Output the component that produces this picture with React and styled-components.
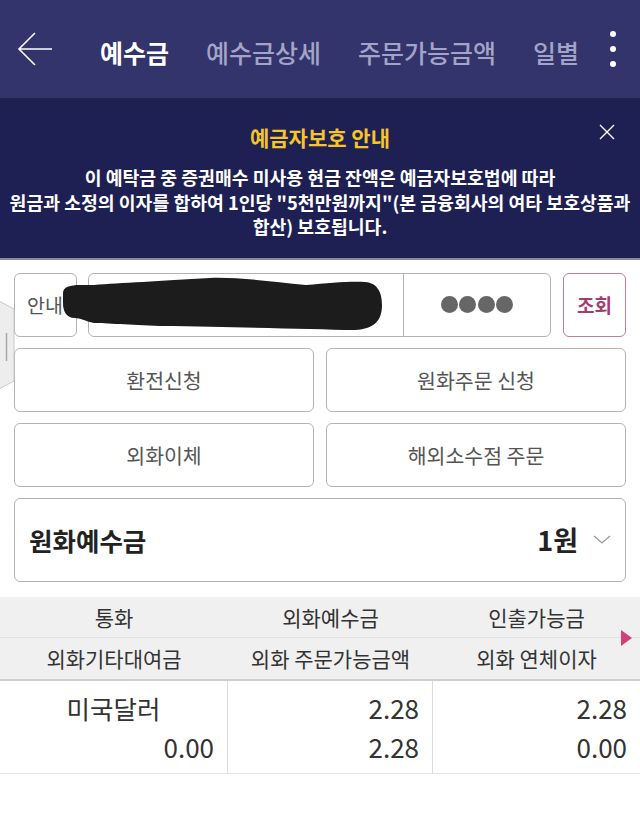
import React from "react";
import styled, { createGlobalStyle } from "styled-components";

const Global = createGlobalStyle`
  html, body { margin: 0; padding: 0; background: #fff; }
  body { font-family: "Noto Sans CJK KR", "Noto Sans", sans-serif; }
  * { box-sizing: border-box; }
`;

const Page = styled.div`
  position: relative;
  width: 640px;
  min-height: 830px;
  background: #fff;
  overflow: hidden;
`;

const Header = styled.header`
  display: flex;
  align-items: center;
  height: 100px;
  padding-bottom: 1px;
  background: #33346b;
  border-bottom: 2px solid #22234a;
`;

const BackBtn = styled.div`
  display: flex;
  width: 36px;
  height: 34px;
  margin-left: 17px;
  margin-right: 47px;
`;

const Tabs = styled.nav`
  display: flex;
  align-items: center;
  gap: 37px;
  width: 478px;
  height: 44px;
  margin-top: 6px;
  overflow: hidden;
  white-space: nowrap;
`;

const Tab = styled.span`
  flex: none;
  font-size: 25px;
  line-height: 40px;
  font-weight: ${(p) => (p.$active ? 700 : 500)};
  color: ${(p) => (p.$active ? "#ffffff" : "#a3a4c8")};
`;

const Kebab = styled.div`
  display: flex;
  flex-direction: column;
  gap: 9px;
  margin-left: auto;
  margin-right: 24px;
`;

const Dot = styled.span`
  width: 6px;
  height: 6px;
  border-radius: 50%;
  background: #fff;
`;

const Notice = styled.section`
  position: relative;
  background: #1e1f53;
  padding: 24px 0 19px;
  border-bottom: 2px solid #8a8a9a;
  text-align: center;
`;

const NoticeTitle = styled.h2`
  margin: 0;
  font-size: 21px;
  line-height: 26px;
  font-weight: 700;
  color: #f6c526;
`;

const CloseBtn = styled.div`
  position: absolute;
  top: 24px;
  right: 25px;
  width: 16px;
  height: 16px;
  display: flex;
`;

const NoticeText = styled.p`
  margin: 15px 0 0;
  font-size: 18.3px;
  line-height: 24.5px;
  font-weight: 700;
  color: #fff;
  white-space: nowrap;
`;

const Content = styled.div`
  display: flex;
  flex-direction: column;
  gap: 11px;
  padding: 13px 14px 0;
`;

const AccountRow = styled.div`
  position: relative;
  display: flex;
  height: 64px;
`;

const boxBase = `
  border: 1px solid #b3b3b3;
  border-radius: 6px;
  background: #fff;
  display: flex;
  align-items: center;
  justify-content: center;
`;

const InfoBox = styled.div`
  ${boxBase}
  width: 63px;
  font-size: 19.5px;
  color: #555;
  justify-content: flex-start;
  padding-left: 12px;
`;

const AccountInput = styled.div`
  ${boxBase}
  width: 463px;
  margin-left: 11px;
  justify-content: stretch;
  align-items: stretch;
`;

const AccountField = styled.div`
  flex: 1;
  border-right: 1px solid #b3b3b3;
`;

const PwField = styled.div`
  width: 146px;
  display: flex;
  align-items: center;
  justify-content: center;
  gap: 1.5px;
`;

const PwDot = styled.span`
  width: 17px;
  height: 17px;
  border-radius: 50%;
  background: #666;
`;

const QueryBtn = styled.div`
  ${boxBase}
  width: 63px;
  margin-left: 12px;
  border-color: #c4799f;
  color: #a33d70;
  font-size: 19px;
  font-weight: 700;
`;

const Redaction = styled.svg`
  position: absolute;
  left: 46px;
  top: 2px;
`;

const ButtonGrid = styled.div`
  display: grid;
  grid-template-columns: 1fr 1fr;
  gap: 11px 12px;
`;

const ActionBtn = styled.div`
  ${boxBase}
  height: 64px;
  font-size: 20.5px;
  color: #555;
`;

const SelectBox = styled.div`
  ${boxBase}
  height: 84px;
  justify-content: flex-start;
  padding: 0 14px 0 14px;
`;

const SelectLabel = styled.span`
  font-size: 25.5px;
  font-weight: 700;
  color: #222;
`;

const SelectValue = styled.span`
  margin-left: auto;
  font-size: 27px;
  font-weight: 700;
  color: #222;
`;

const Chevron = styled.svg`
  margin-left: 15px;
`;

const Table = styled.div`
  position: relative;
  margin-top: 15px;
`;

const HeadRow = styled.div`
  display: grid;
  grid-template-columns: 228px 205px 1fr;
  height: ${(p) => p.$h}px;
  background: #f0f0f0;
  border-bottom: ${(p) => (p.$last ? "2px solid #cfcfcf" : "1px solid #e2e2e2")};
`;

const HeadCell = styled.div`
  display: flex;
  align-items: center;
  justify-content: center;
  font-size: 21px;
  color: #333;
`;

const BodyRow = styled.div`
  display: grid;
  grid-template-columns: 228px 205px 1fr;
  border-bottom: 1px solid #e4e4e4;
`;

const BodyCell = styled.div`
  display: flex;
  flex-direction: column;
  padding: 7px 13px 7px 0;
  border-right: ${(p) => (p.$last ? "none" : "1px solid #dcdcdc")};
`;

const CellLine = styled.div`
  height: 39px;
  display: flex;
  align-items: center;
  justify-content: ${(p) => (p.$center ? "center" : "flex-end")};
  padding-left: ${(p) => (p.$center ? "13px" : "0")};
  font-size: ${(p) => (p.$center ? "25.5px" : "26px")};
  color: #333;
`;

const Arrow = styled.span`
  position: absolute;
  right: 8px;
  top: 33px;
  width: 0;
  height: 0;
  border-top: 8px solid transparent;
  border-bottom: 8px solid transparent;
  border-left: 11px solid #d4407c;
`;

const SideHandle = styled.svg`
  position: absolute;
  left: 0;
  top: 300px;
`;

export default function App() {
  return (
    <Page>
      <Global />
      <Header>
        <BackBtn>
          <svg width="36" height="34" viewBox="0 0 36 34" fill="none" stroke="#fff" strokeWidth="1.6">
            <path d="M35 17H2M18 1L2 17l16 16" />
          </svg>
        </BackBtn>
        <Tabs>
          <Tab $active>예수금</Tab>
          <Tab>예수금상세</Tab>
          <Tab>주문가능금액</Tab>
          <Tab>일별</Tab>
        </Tabs>
        <Kebab>
          <Dot />
          <Dot />
          <Dot />
        </Kebab>
      </Header>

      <Notice>
        <NoticeTitle>예금자보호 안내</NoticeTitle>
        <CloseBtn>
          <svg width="16" height="16" viewBox="0 0 16 16" stroke="#fff" strokeWidth="1.4">
            <path d="M1 1l14 14M15 1L1 15" />
          </svg>
        </CloseBtn>
        <NoticeText>
          이 예탁금 중 증권매수 미사용 현금 잔액은 예금자보호법에 따라
          <br />
          원금과 소정의 이자를 합하여 1인당 "5천만원까지"(본 금융회사의 여타 보호상품과
          <br />
          합산) 보호됩니다.
        </NoticeText>
      </Notice>

      <Content>
        <AccountRow>
          <InfoBox>안내</InfoBox>
          <AccountInput>
            <AccountField />
            <PwField>
              <PwDot />
              <PwDot />
              <PwDot />
              <PwDot />
            </PwField>
          </AccountInput>
          <QueryBtn>조회</QueryBtn>
          <Redaction width="330" height="62" viewBox="0 0 330 62">
            <path
              fill="#1c1c1c"
              d="M3 18 C3 12 10 10 20 10 L34 10 C60 8 100 6 150 3 C175 2 210 6 246 10 C270 8 290 6 305 7 C318 8 322 18 322 30 C322 45 315 54 295 55 C250 54 180 52 100 51 C70 50 45 48 34 48 C25 46 20 43 15 43 C6 43 3 36 3 28 Z"
            />
          </Redaction>
        </AccountRow>

        <ButtonGrid>
          <ActionBtn>환전신청</ActionBtn>
          <ActionBtn>원화주문 신청</ActionBtn>
          <ActionBtn>외화이체</ActionBtn>
          <ActionBtn>해외소수점 주문</ActionBtn>
        </ButtonGrid>

        <SelectBox>
          <SelectLabel>원화예수금</SelectLabel>
          <SelectValue>1원</SelectValue>
          <Chevron width="18" height="9" viewBox="0 0 18 9" fill="none" stroke="#999" strokeWidth="1.2">
            <path d="M1 1l8 7 8-7" />
          </Chevron>
        </SelectBox>
      </Content>

      <Table>
        <HeadRow $h={41}>
          <HeadCell>통화</HeadCell>
          <HeadCell>외화예수금</HeadCell>
          <HeadCell>인출가능금</HeadCell>
        </HeadRow>
        <HeadRow $h={43} $last>
          <HeadCell>외화기타대여금</HeadCell>
          <HeadCell>외화 주문가능금액</HeadCell>
          <HeadCell>외화 연체이자</HeadCell>
        </HeadRow>
        <Arrow />
        <BodyRow>
          <BodyCell>
            <CellLine $center>미국달러</CellLine>
            <CellLine>0.00</CellLine>
          </BodyCell>
          <BodyCell>
            <CellLine>2.28</CellLine>
            <CellLine>2.28</CellLine>
          </BodyCell>
          <BodyCell $last>
            <CellLine>2.28</CellLine>
            <CellLine>0.00</CellLine>
          </BodyCell>
        </BodyRow>
      </Table>

      <SideHandle width="16" height="90" viewBox="0 0 16 90">
        <path d="M-1 1 L14 9 L14 81 L-1 89 Z" fill="#ededed" stroke="#c9c9c9" strokeWidth="1" />
        <path d="M6.5 33 V61" stroke="#a8a8a8" strokeWidth="1.5" />
      </SideHandle>
    </Page>
  );
}
